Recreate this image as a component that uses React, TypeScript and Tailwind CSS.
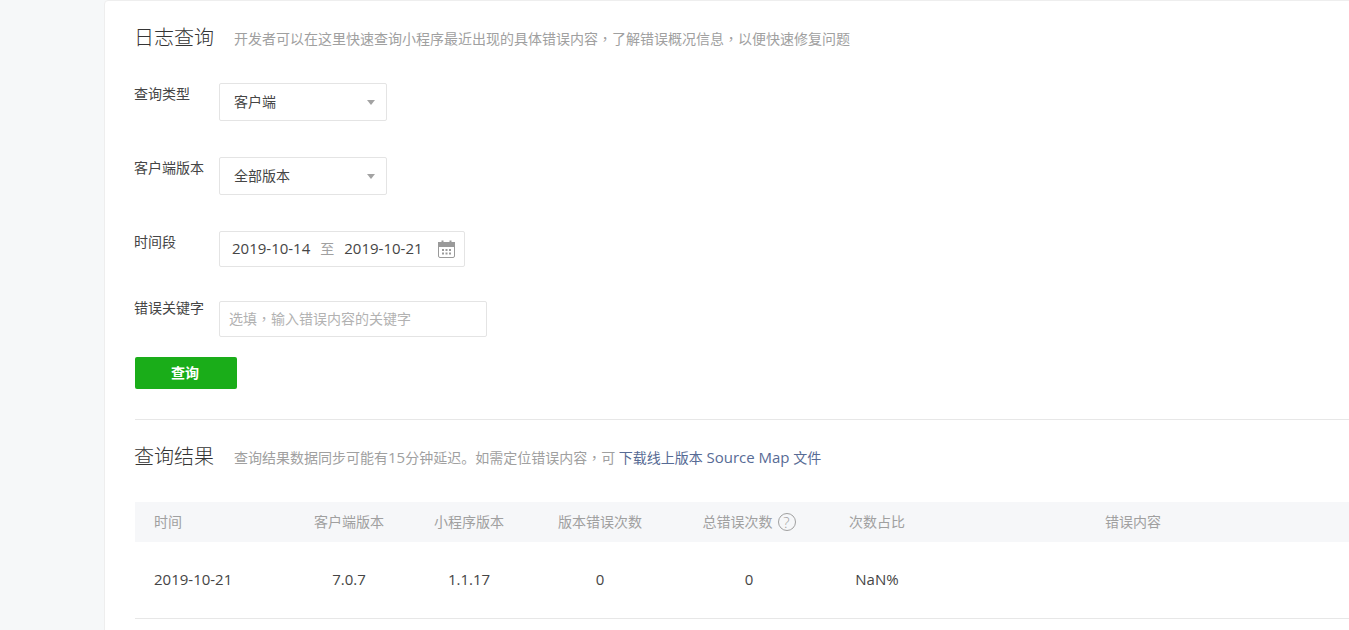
import React from "react";

const font = { fontFamily: '"Open Sans", "Noto Sans CJK SC", sans-serif' };

function Comma() {
  return <span className="font-['Noto_Sans_CJK_TC']">，</span>;
}

function Label({ children, className = "" }: { children: React.ReactNode; className?: string }) {
  return <div className={`w-[84px] shrink-0 text-[14px] leading-[20px] text-[#454545] pt-[1px] -ml-[1px] mr-[1px] ${className}`}>{children}</div>;
}

function Select({ value }: { value: string }) {
  return (
    <div className="w-[168px] h-[38px] border border-[#e4e4e4] rounded-[2px] bg-white flex items-center justify-between pl-[14px] pr-[11px]">
      <span className="text-[14px] text-[#454545] pb-[2px]">{value}</span>
      <span className="w-0 h-0 border-x-[4px] border-x-transparent border-t-[5px] border-t-[#a3a3a3]" />
    </div>
  );
}

function Calendar() {
  return (
    <svg width="17" height="18" viewBox="0 0 17 18" fill="none">
      <rect x="0.5" y="2.5" width="16" height="15" rx="1.5" stroke="#9a9a9a" />
      <rect x="0.5" y="2.5" width="16" height="4" fill="#9a9a9a" stroke="#9a9a9a" />
      <rect x="3.5" y="0.5" width="2" height="3" fill="#9a9a9a" />
      <rect x="11.5" y="0.5" width="2" height="3" fill="#9a9a9a" />
      {[4, 7.5, 11].map((x) => [9, 12.5].map((y) => <rect key={`${x}-${y}`} x={x} y={y} width="2" height="2" fill="#9a9a9a" />))}
    </svg>
  );
}

const columns = "grid grid-cols-[154px_120px_120px_142px_156px_100px_412px_1fr] items-center";

export default function App() {
  return (
    <div style={font} className="h-[630px] overflow-hidden bg-[#f6f8f9] pl-[104px]">
      <div className="h-[640px] bg-white border border-[#eeeeee] rounded-tl-[4px] pl-[30px] pt-[22px] -mr-[2px]">
        <div className="flex items-center h-[30px]">
          <h1 className="text-[20px] font-light text-[#353535] leading-[30px] -ml-[1px]">日志查询</h1>
          <p className="ml-[20px] text-[14px] text-[#a0a0a0] pt-[1px]">开发者可以在这里快速查询小程序最近出现的具体错误内容<Comma />了解错误概况信息<Comma />以便快速修复问题</p>
        </div>

        <div className="flex mt-[30px]">
          <Label>查询类型</Label>
          <Select value="客户端" />
        </div>
        <div className="flex mt-[36px]">
          <Label>客户端版本</Label>
          <Select value="全部版本" />
        </div>
        <div className="flex mt-[36px]">
          <Label>时间段</Label>
          <div className="w-[246px] h-[36px] border border-[#e4e4e4] rounded-[2px] flex items-center pl-[12px] pb-[2px] text-[15px] text-[#454545]">
            <span>2019-10-14</span>
            <span className="ml-[10px] text-[14px] text-[#a0a0a0]">至</span>
            <span className="ml-[10px]">2019-10-21</span>
            <span className="ml-[15px] pt-[2px] flex"><Calendar /></span>
          </div>
        </div>
        <div className="flex mt-[34px]">
          <Label className="-mt-[4px]">错误关键字</Label>
          <div className="w-[268px] h-[36px] border border-[#e4e4e4] rounded-[2px] flex items-center pl-[9px] pb-[2px] text-[14px] text-[#b2b2b2]">
            选填<Comma />输入错误内容的关键字
          </div>
        </div>
        <button className="block mt-[20px] w-[102px] h-[32px] bg-[#1aad19] rounded-[2px] text-white text-[14px] font-bold pb-[2px] pr-[2px]">查询</button>

        <div className="mt-[30px] border-t border-[#e7e7e7]" />

        <div className="flex items-center h-[30px] mt-[22px]">
          <h2 className="text-[20px] font-light text-[#353535] leading-[30px] -ml-[1px]">查询结果</h2>
          <p className="ml-[20px] text-[14px] text-[#a0a0a0] pt-[1px]">
            查询结果数据同步可能有<span className="text-[15px]">15</span>分钟延迟。如需定位错误内容<Comma />可 <a className="text-[#576b95]">下载线上版本 <span className="text-[15px]">Source Map</span> 文件</a>
          </p>
        </div>

        <div className={`${columns} mt-[30px] h-[40px] pb-[2px] bg-[#f6f7f9] text-[14px] text-[#a0a0a0]`}>
          <div className="pl-[19px]">时间</div>
          <div className="text-center">客户端版本</div>
          <div className="text-center">小程序版本</div>
          <div className="text-center">版本错误次数</div>
          <div className="flex items-center justify-center gap-[5px]">
            总错误次数
            <span className="mt-[2px] w-[18px] h-[18px] rounded-full border border-[#a0a0a0] flex items-center justify-center text-[15px] font-light leading-none">?</span>
          </div>
          <div className="text-center">次数占比</div>
          <div className="text-center">错误内容</div>
          <div />
        </div>
        <div className={`${columns} h-[77px] pb-[2px] border-b border-[#e7e7e7] text-[15px] text-[#454545]`}>
          <div className="pl-[19px]">2019-10-21</div>
          <div className="text-center">7.0.7</div>
          <div className="text-center">1.1.17</div>
          <div className="text-center">0</div>
          <div className="text-center">0</div>
          <div className="text-center">NaN%</div>
          <div />
          <div />
        </div>
      </div>
    </div>
  );
}
